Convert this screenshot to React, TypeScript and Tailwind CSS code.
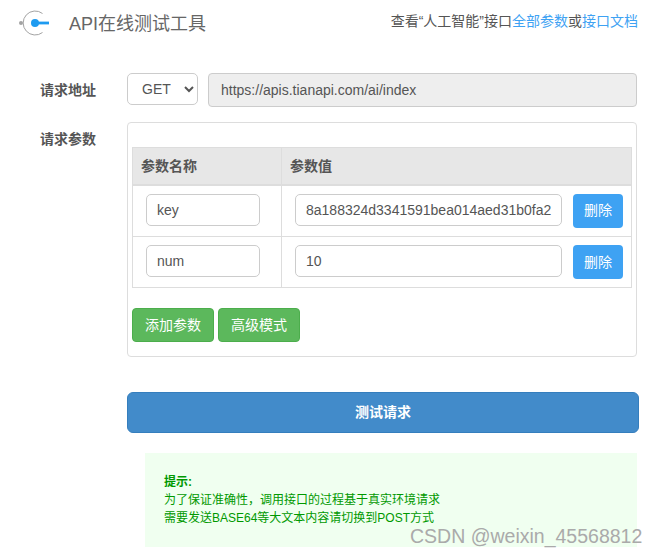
import React from 'react';

const FONT = 'font-["Liberation_Sans","Noto_Sans_CJK_SC",sans-serif]';

const params = [
  { name: 'key', value: '8a188324d3341591bea014aed31b0fa2' },
  { name: 'num', value: '10' },
];

const Logo = () => (
  <svg width="32" height="26" viewBox="0 0 32 26" fill="none">
    <path d="M24.5 3.5A12 12 0 1 0 24.5 22.5" stroke="#a3a3a3" strokeWidth="1" />
    <circle cx="3" cy="13" r="2" fill="#a3a3a3" />
    <circle cx="17" cy="13" r="4" fill="#1e9bf0" />
    <rect x="17" y="11.6" width="14" height="2.8" fill="#1e9bf0" />
  </svg>
);

const App: React.FC = () => {
  return (
    <div className={`relative w-[656px] h-[555px] overflow-hidden bg-white text-[#555] ${FONT}`}>
      <div className="flex justify-between h-[73px] pl-[18px] pr-[18px]">
        <div className="flex items-start pt-[10px]">
          <Logo />
          <span className="ml-[19px] text-[18px] leading-[28px] text-[#666]">API在线测试工具</span>
        </div>
        <div className="pt-[11px] text-[14px] leading-[20px] text-[#555]">
          查看“人工智能”接口<a className="text-[#3ea2f3]">全部参数</a>或<a className="text-[#3ea2f3]">接口文档</a>
        </div>
      </div>

      <div className="flex">
        <div className="w-[127px] pl-[40px] pt-[7px] text-[14px] leading-[20px] font-bold">请求地址</div>
        <select className="w-[71px] h-[32px] px-[10px] bg-white border border-[#ccc] rounded-[5px] text-[14px] text-[#555]">
          <option>GET</option>
        </select>
        <input
          readOnly
          value="https://apis.tianapi.com/ai/index"
          className="ml-[10px] w-[429px] h-[34px] px-[12px] bg-[#eee] border border-[#ccc] rounded-[4px] text-[14px] text-[#555]"
        />
      </div>

      <div className="flex mt-[15px]">
        <div className="w-[127px] pl-[40px] pt-[7px] text-[14px] leading-[20px] font-bold">请求参数</div>
        <div className="w-[510px] h-[235px] px-[4px] pt-[24px] border border-[#ddd] rounded-[4px]">
          <table className="w-[500px] table-fixed border-collapse text-[14px]">
            <thead>
              <tr className="h-[37px] bg-[#e7e7e7]">
                <th className="w-[149px] pl-[8px] pt-[1px] text-left font-bold border border-[#ddd] border-b-2">参数名称</th>
                <th className="pl-[8px] pt-[1px] text-left font-bold border border-[#ddd] border-b-2">参数值</th>
              </tr>
            </thead>
            <tbody>
              {params.map((p, i) => (
                <tr key={p.name} className={i === 0 ? 'h-[52px]' : 'h-[51px]'}>
                  <td className="pl-[13px] align-top pt-[8px] border border-[#ddd]">
                    <input
                      readOnly
                      value={p.name}
                      className="block w-[114px] h-[32px] px-[10px] border border-[#ccc] rounded-[5px] text-[14px] text-[#555]"
                    />
                  </td>
                  <td className="pl-[13px] align-top pt-[8px] border border-[#ddd]">
                    <div className="flex">
                      <input
                        readOnly
                        value={p.value}
                        className="w-[267px] h-[32px] pl-[10px] pr-[4px] border border-[#ccc] rounded-[5px] text-[14px] text-[#555]"
                      />
                      <button className="ml-[11px] w-[50px] h-[34px] bg-[#3ea2f3] rounded-[4px] text-white text-[14px]">删除</button>
                    </div>
                  </td>
                </tr>
              ))}
            </tbody>
          </table>
          <div className="flex gap-[4px] mt-[20px]">
            <button className="w-[82px] h-[34px] bg-[#5cb85c] border border-[#4cae4c] rounded-[4px] text-white text-[14px]">添加参数</button>
            <button className="w-[82px] h-[34px] bg-[#5cb85c] border border-[#4cae4c] rounded-[4px] text-white text-[14px]">高级模式</button>
          </div>
        </div>
      </div>

      <div className="ml-[127px] mt-[35px] w-[512px]">
        <button className="block w-full h-[41px] bg-[#428bca] border border-[#357ebd] rounded-[6px] text-white text-[14px] font-bold">测试请求</button>
      </div>

      <div className="ml-[145px] mt-[20px] w-[492px] h-[94px] pl-[19px] pt-[20px] bg-[#f0fff0] text-[12px] leading-[18px] text-[#090]">
        <div className="font-bold">提示:</div>
        <div>{'为了保证准确性\uFF0C调用接口的过程基于真实环境请求'}</div>
        <div>需要发送BASE64等大文本内容请切换到POST方式</div>
      </div>

      <div className="absolute left-[410px] top-[524px] text-[19.5px] leading-[24px] whitespace-nowrap text-[#aaa]">
        CSDN @weixin_45568812
      </div>
    </div>
  );
};

export default App;
